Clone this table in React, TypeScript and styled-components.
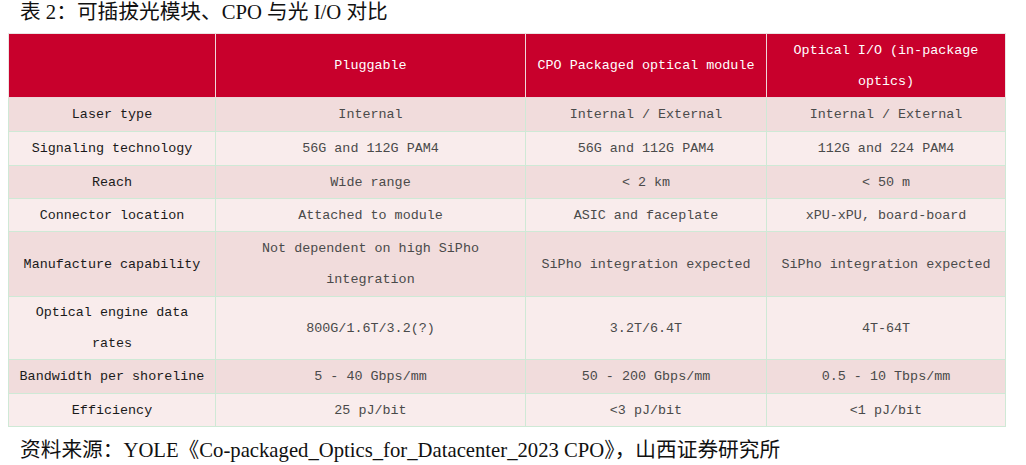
import styled, { createGlobalStyle } from "styled-components";

type Row = {
  label: string;
  values: string[];
  height: number;
};

const header = [
  "",
  "Pluggable",
  "CPO Packaged optical module",
  "Optical I/O (in-package optics)",
];

const rows: Row[] = [
  { label: "Laser type", values: ["Internal", "Internal / External", "Internal / External"], height: 34 },
  { label: "Signaling technology", values: ["56G and 112G PAM4", "56G and 112G PAM4", "112G and 224 PAM4"], height: 34 },
  { label: "Reach", values: ["Wide range", "< 2 km", "< 50 m"], height: 33 },
  { label: "Connector location", values: ["Attached to module", "ASIC and faceplate", "xPU-xPU, board-board"], height: 33 },
  {
    label: "Manufacture capability",
    values: ["Not dependent on high SiPho integration", "SiPho integration expected", "SiPho integration expected"],
    height: 65,
  },
  { label: "Optical engine data rates", values: ["800G/1.6T/3.2(?)", "3.2T/6.4T", "4T-64T"], height: 63 },
  { label: "Bandwidth per shoreline", values: ["5 - 40 Gbps/mm", "50 - 200 Gbps/mm", "0.5 - 10 Tbps/mm"], height: 34 },
  { label: "Efficiency", values: ["25 pJ/bit", "<3 pJ/bit", "<1 pJ/bit"], height: 33 },
];

const widths = [207, 310, 241, 239];

function App() {
  return (
    <>
      <GlobalStyle />
      <Page>
        <Title>表 2：可插拔光模块、CPO 与光 I/O 对比</Title>
        <Table>
          <colgroup>
            {widths.map((w, i) => (
              <col key={i} style={{ width: w }} />
            ))}
          </colgroup>
          <thead>
            <tr>
              {header.map((h, i) => (
                <HeadCell key={i}>{h}</HeadCell>
              ))}
            </tr>
          </thead>
          <tbody>
            {rows.map((row, i) => (
              <BodyRow key={row.label} shade={i % 2 === 0} h={row.height}>
                <LabelCell>{row.label}</LabelCell>
                {row.values.map((v, j) => (
                  <ValueCell key={j}>{v}</ValueCell>
                ))}
              </BodyRow>
            ))}
          </tbody>
        </Table>
        <Source>
          资料来源：YOLE《Co-packaged_Optics_for_Datacenter_2023 CPO》，山西证券研究所
        </Source>
      </Page>
    </>
  );
}

const GlobalStyle = createGlobalStyle`
  html, body {
    margin: 0;
    padding: 0;
    background: #ffffff;
  }
`;

const Page = styled.div`
  width: 1026px;
  height: 465px;
  padding: 0 0 0 8px;
  box-sizing: border-box;
  overflow: hidden;
`;

const Title = styled.h1`
  margin: 0 0 0 12px;
  height: 33px;
  line-height: 24px;
  font-family: "Liberation Serif", "Noto Sans CJK SC", serif;
  font-size: 20.7px;
  font-weight: 400;
  color: #111111;
`;

const Table = styled.table`
  width: 997px;
  table-layout: fixed;
  border-collapse: collapse;
  border: 1px solid #ebe4e4;
  font-family: "Liberation Mono", "Noto Sans CJK SC", monospace;
  font-size: 13.4px;
`;

const HeadCell = styled.th`
  height: 63px;
  padding: 0 6px;
  background: #c8002c;
  color: #ffffff;
  font-weight: 400;
  line-height: 31px;
  text-align: center;
  vertical-align: middle;
  border-left: 1px solid #efd6da;
  border-bottom: 1px solid #efd6da;

  &:first-child {
    border-left: none;
  }
`;

const BodyRow = styled.tr<{ shade: boolean; h: number }>`
  height: ${(p) => p.h}px;
  background: ${(p) => (p.shade ? "#f1dcdc" : "#f9ecec")};
`;

const cellBase = `
  padding: 0 6px;
  line-height: 31px;
  text-align: center;
  vertical-align: middle;
  border: 1px solid #cfe9d6;
`;

const LabelCell = styled.td`
  ${cellBase}
  color: #1a1a1a;
`;

const ValueCell = styled.td`
  ${cellBase}
  color: #4a4a4a;
`;

const Source = styled.p`
  margin: 11px 0 0 12px;
  line-height: 24px;
  font-family: "Liberation Serif", "Noto Sans CJK SC", serif;
  font-size: 20.7px;
  color: #111111;
`;

export default App;
